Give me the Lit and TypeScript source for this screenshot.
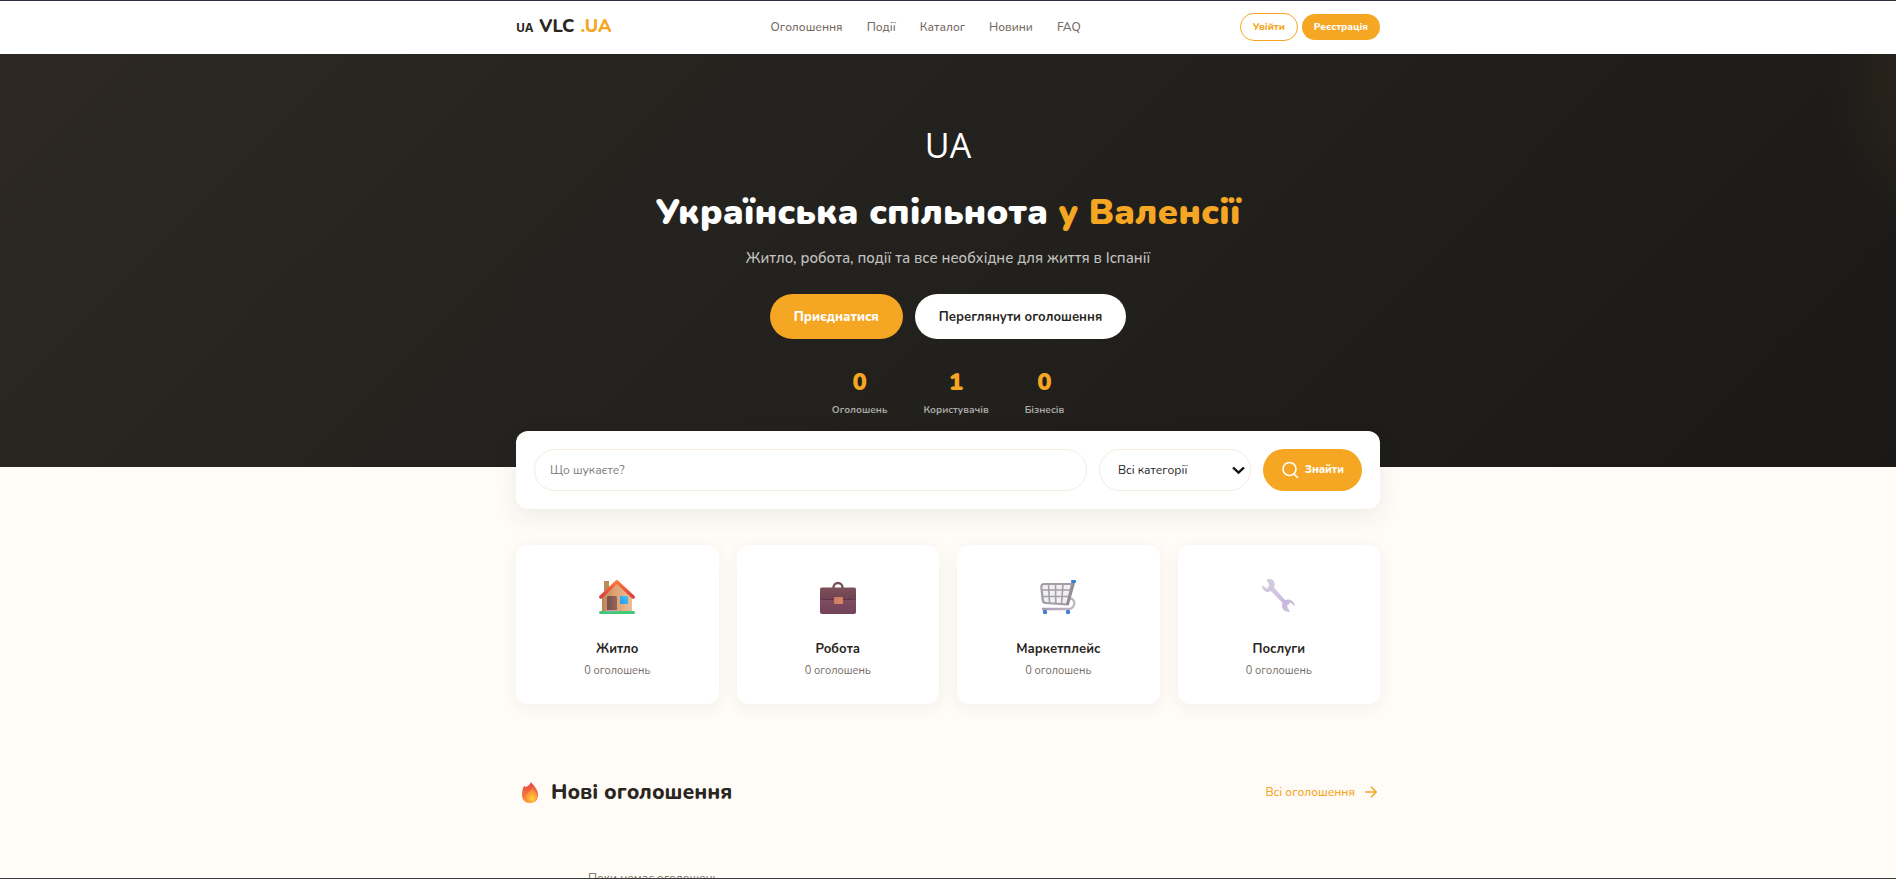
import { LitElement, html, css, svg } from "lit";
import { customElement } from "lit/decorators.js";

const house = svg`
  <defs>
    <linearGradient id="wall" x1="0" x2="1"><stop offset="0" stop-color="#b98558"/><stop offset=".4" stop-color="#dfa071"/><stop offset="1" stop-color="#e9bd96"/></linearGradient>
    <linearGradient id="roof" x1="0" y1="0" x2="0" y2="1"><stop offset="0" stop-color="#fb7a3c"/><stop offset="1" stop-color="#dc3a3c"/></linearGradient>
    <linearGradient id="door" x1="0" x2="1"><stop offset="0" stop-color="#74504a"/><stop offset="1" stop-color="#97655a"/></linearGradient>
    <linearGradient id="pane" x1="0" y1="1" x2="1" y2="0"><stop offset="0" stop-color="#2b95ee"/><stop offset="1" stop-color="#45c4f8"/></linearGradient>
  </defs>
  <rect x="5" y="2" width="5" height="13" fill="#b98a5c"/>
  <path d="M3 17 17.500 3 33 17v16H3z" fill="url(#wall)"/>
  <rect x="0" y="32" width="36" height="3" rx="1.500" fill="#3fca75"/>
  <path d="M8 32V18.500Q8 17 9.500 17h7Q18 17 18 18.500V32z" fill="url(#door)"/>
  <rect x="7" y="31" width="12" height="1.500" fill="#b9a7b5"/>
  <rect x="21" y="17" width="8" height="8" fill="url(#pane)"/>
  <path d="m1.800 18 16-15.200L34.200 18" fill="none" stroke="url(#roof)" stroke-width="3.400" stroke-linecap="round" stroke-linejoin="round"/>`;

const briefcase = svg`
  <defs>
    <linearGradient id="flap" x1="0" y1="0" x2="0" y2="1"><stop offset="0" stop-color="#7e5058"/><stop offset="1" stop-color="#6c4152"/></linearGradient>
    <linearGradient id="body" x1="0" y1="0" x2="0" y2="1"><stop offset="0" stop-color="#8a5163"/><stop offset="1" stop-color="#72435a"/></linearGradient>
    <linearGradient id="lock" x1="0" y1="0" x2="1" y2="1"><stop offset="0" stop-color="#c9785f"/><stop offset="1" stop-color="#dc8a6b"/></linearGradient>
  </defs>
  <path d="M13.500 10V8.500a4.500 4.500 0 0 1 9 0V10" fill="none" stroke="#775057" stroke-width="2.400"/>
  <rect y="9" width="36" height="26" rx="2" fill="url(#body)"/>
  <path d="M0 10.500Q0 8.500 2 8.500h32q2 0 2 2V19q0 2-2 2H2q-2 0-2-2z" fill="url(#flap)"/>
  <path d="M1 20.500h34" stroke="#5f3450" stroke-width="1"/>
  <rect x="14" y="18" width="9" height="7" rx="1" fill="url(#lock)"/>`;

const cart = svg`
  <defs><linearGradient id="rail" x1="0" x2="1"><stop offset="0" stop-color="#ab9bb8"/><stop offset="1" stop-color="#bfb8c3"/></linearGradient></defs>
  <path d="M2 30h26c8 0 8-10.500 2-10.500" fill="none" stroke="url(#rail)" stroke-width="2.400"/>
  <path d="M32 5H4Q1.300 5 1.400 8v1l1.300 12q.5 3 3.300 3l21 1.500z" fill="#f1f0f1" stroke="#a29da3" stroke-width="2.200" stroke-linejoin="round"/>
  <path d="M8.500 5l1 19M15.500 5l.3 19.500M23 5 21.500 25M1.500 11H30M2.500 17.500h26" fill="none" stroke="#a39fa5" stroke-width="1.600"/>
  <path d="M34 3 27.500 26" stroke="#928c95" stroke-width="2.600"/>
  <rect x="31" y="1" width="5" height="3" rx="1" fill="#3b7fd0"/>
  <circle cx="5" cy="33" r="2.200" fill="#3f7fcb"/><circle cx="28" cy="33" r="2.200" fill="#3f7fcb"/>`;

const wrench = svg`
  <defs><linearGradient id="steel" x1="0" y1="0" x2="1" y2="1"><stop offset="0" stop-color="#cfccd4"/><stop offset=".45" stop-color="#d3c4e6"/><stop offset=".7" stop-color="#c7b6dd"/><stop offset="1" stop-color="#d2cfd8"/></linearGradient></defs>
  <path d="M8 0c4.500 0 7 4 5 8.500L24 21c4.500-2 10 1 10 6.500l-4.500-4-3.500 3.500 3 6c-6 .5-9.500-4-7.500-9L10 12C5.500 14.500 1 11.500 1 6.500L6 9.500 8.500 6.500 5.500.5Q6.500 0 8 0z" fill="url(#steel)"/>`;

const flame = svg`
  <defs>
    <linearGradient id="fire" x1="0" y1="0" x2="0" y2="1"><stop offset="0" stop-color="#e34246"/><stop offset=".6" stop-color="#f6743c"/><stop offset="1" stop-color="#fb9a35"/></linearGradient>
    <radialGradient id="core" cx=".6" cy=".75" r=".6"><stop offset="0" stop-color="#ffcf3d"/><stop offset="1" stop-color="#fa8a38"/></radialGradient>
  </defs>
  <path d="M9 0c2 3 7 7 7 13 0 5-3 8-8 8s-8-3.500-8-8c0-3 .5-6 2-9l2 1c1.500-1 4-2 5-5z" fill="url(#fire)"/>
  <path d="M10.500 6c2 3 4.500 5 4.500 8.500 0 4-3 6-6.500 6s-5.500-2.500-5-6C4 11 8 10 10.500 6z" fill="url(#core)"/>`;

const categories = [
  { icon: house, title: "Житло" },
  { icon: briefcase, title: "Робота" },
  { icon: cart, title: "Маркетплейс" },
  { icon: wrench, title: "Послуги" },
];
const nav = ["Оголошення", "Події", "Каталог", "Новини", "FAQ"];
const stats = [
  ["0", "Оголошень"],
  ["1", "Користувачів"],
  ["0", "Бізнесів"],
];

@customElement("app-root")
export class AppRoot extends LitElement {
  static styles = css`
    :host {
      --accent: #f5a623;
      --ink: #2a2622;
      --muted: #756b63;
      display: block;
      box-sizing: border-box;
      height: 100vh;
      overflow: hidden;
      border-top: 1px solid #2e3042;
      border-bottom: 1px solid #3a3a3c;
      background: #fffcf7;
      color: var(--ink);
      font: 400 12px/18px Nunito, Lato, "Open Sans", sans-serif;
    }
    * { box-sizing: border-box; }
    a { color: inherit; text-decoration: none; }
    h1, h2, h3, p { margin: 0; }
    button, input, select { font: inherit; }
    .wrap { max-width: 864px; margin: 0 auto; }
    .top { background: #fff; }
    .bar {
      display: flex;
      justify-content: space-between;
      align-items: center;
      height: 53px;
      padding-bottom: 1px;
    }
    .logo {
      display: flex;
      align-items: baseline;
      gap: 6px;
      font-size: 18px;
      font-weight: 800;
    }
    .logo small { font: 700 12px/18px "Open Sans", sans-serif; }
    .logo .tld, .title em { color: var(--accent); font-style: normal; }
    .nav { display: flex; gap: 24px; color: var(--muted); font-weight: 500; }
    .auth { display: flex; align-items: center; justify-content: flex-end; gap: 4px; }
    .pill {
      border: 0;
      border-radius: 32px;
      background: var(--accent);
      color: #fff;
      font-weight: 800;
      cursor: pointer;
    }
    .small { height: 26px; padding: 0 12px; font-size: 10px; }
    .outline { height: 28px; background: #fff; border: 1px solid var(--accent); color: var(--accent); }
    .hero {
      padding: 64px 0 48px;
      background:
        radial-gradient(circle 190px at calc(100% + 120px) 30px, rgba(245, 166, 35, 0.13), transparent),
        linear-gradient(135deg, #2d2824 0%, #22211d 50%, #1a1918 100%);
      color: #fff;
      text-align: center;
    }
    .flag { font: 400 34px/54px "Open Sans", sans-serif; }
    .title { margin-top: 17px; font-size: 36px; line-height: 47px; font-weight: 900; }
    .lead { margin-top: 10px; font-size: 15px; line-height: 24px; font-weight: 500; color: #c4c2c0; }
    .actions { display: flex; justify-content: center; gap: 12px; margin-top: 24px; }
    .large { height: 45px; padding: 0 24px; font-size: 13px; }
    .light { background: #fff; color: var(--ink); font-weight: 700; }
    .stats { display: flex; justify-content: center; gap: 36px; margin-top: 25px; }
    .stat b { display: block; font-size: 24px; line-height: 37px; font-weight: 900; color: var(--accent); }
    .stat span { display: block; font-size: 10px; line-height: 18px; font-weight: 700; color: #a9a7a5; }
    .search {
      position: relative;
      display: grid;
      grid-template-columns: 1fr 152px auto;
      gap: 12px;
      margin-top: -36px;
      padding: 18px;
      background: #fff;
      border-radius: 12px;
      box-shadow: 0 8px 24px rgba(45, 40, 36, 0.08);
    }
    .field {
      width: 100%;
      height: 42px;
      padding: 0 15px;
      border: 1px solid #f5ebe0;
      border-radius: 21px;
      background: #fff;
      color: #1f1c19;
      outline: none;
    }
    .field::placeholder { color: #7b7b7b; opacity: 1; }
    .pick { position: relative; display: block; }
    .pick select { appearance: none; padding: 0 18px; }
    .pick svg { position: absolute; right: 6px; top: 17px; pointer-events: none; }
    .find { display: flex; align-items: center; gap: 6px; height: 42px; padding: 0 18px; font-size: 11px; }
    .cats { display: grid; grid-template-columns: repeat(4, 1fr); gap: 18px; margin-top: 36px; }
    .card {
      display: flex;
      flex-direction: column;
      align-items: center;
      padding: 34px 18px 24px;
      background: #fff;
      border-radius: 12px;
      box-shadow: 0 4px 18px rgba(45, 40, 36, 0.06);
    }
    .card h3 { margin-top: 23px; font-size: 13px; line-height: 22px; font-weight: 700; }
    .card p { margin-top: 2px; font-size: 11px; line-height: 18px; color: var(--muted); }
    .head { display: flex; align-items: center; justify-content: space-between; margin-top: 72px; }
    .head h2 { display: flex; align-items: center; gap: 13px; padding-left: 6px; font-size: 21px; line-height: 32px; font-weight: 800; }
    .more { display: flex; align-items: center; gap: 10px; padding-right: 3px; color: var(--accent); font-weight: 500; }
    .empty { width: 275px; margin-top: 61px; text-align: center; color: var(--muted); }
  `;

  render() {
    return html`
      <header class="top">
        <div class="wrap bar">
          <a class="logo" href="#"><small>UA</small><span>VLC</span><span class="tld">.UA</span></a>
          <nav class="nav">${nav.map((n) => html`<a href="#">${n}</a>`)}</nav>
          <div class="auth">
            <button class="pill small outline">Увійти</button>
            <button class="pill small">Реєстрація</button>
          </div>
        </div>
      </header>
      <section class="hero">
        <div class="flag">UA</div>
        <h1 class="title">Українська спільнота <em>у Валенсії</em></h1>
        <p class="lead">Житло, робота, події та все необхідне для життя в Іспанії</p>
        <div class="actions">
          <button class="pill large">Приєднатися</button>
          <button class="pill large light">Переглянути оголошення</button>
        </div>
        <div class="stats">
          ${stats.map(([n, label]) => html`<div class="stat"><b>${n}</b><span>${label}</span></div>`)}
        </div>
      </section>
      <main class="wrap">
        <form class="search" @submit=${(e: Event) => e.preventDefault()}>
          <input class="field" type="text" aria-label="Що шукаєте?" placeholder="Що шукаєте?" />
          <div class="pick">
            <select class="field" aria-label="Всі категорії">
              <option>Всі категорії</option>
              ${categories.map((c) => html`<option>${c.title}</option>`)}
            </select>
            <svg width="13" height="9" viewBox="0 0 13 9" fill="none" stroke="#111" stroke-width="2.400"><path d="m1 1.500 5.500 5.200L12 1.500" /></svg>
          </div>
          <button class="pill find">
            <svg width="18" height="18" viewBox="0 0 18 18" fill="none" stroke="currentColor" stroke-width="1.500" stroke-linecap="round"><circle cx="8.500" cy="8" r="6.500" /><path d="m13 13 3.500 3.500" /></svg>
            Знайти
          </button>
        </form>
        <section class="cats">
          ${categories.map(
            (c) => html`<a class="card" href="#">
              <svg width="36" height="36" viewBox="0 0 36 36">${c.icon}</svg>
              <h3>${c.title}</h3>
              <p>0 оголошень</p>
            </a>`
          )}
        </section>
        <div class="head">
          <h2><svg width="16" height="21" viewBox="0 0 16 21">${flame}</svg>Нові оголошення</h2>
          <a class="more" href="#">Всі оголошення
            <svg width="12" height="12" viewBox="0 0 12 12" fill="none" stroke="currentColor" stroke-width="1.600"><path d="M0 6h11M6 .8 11.200 6 6 11.200" /></svg>
          </a>
        </div>
        <p class="empty">Поки немає оголошень</p>
      </main>
    `;
  }
}
